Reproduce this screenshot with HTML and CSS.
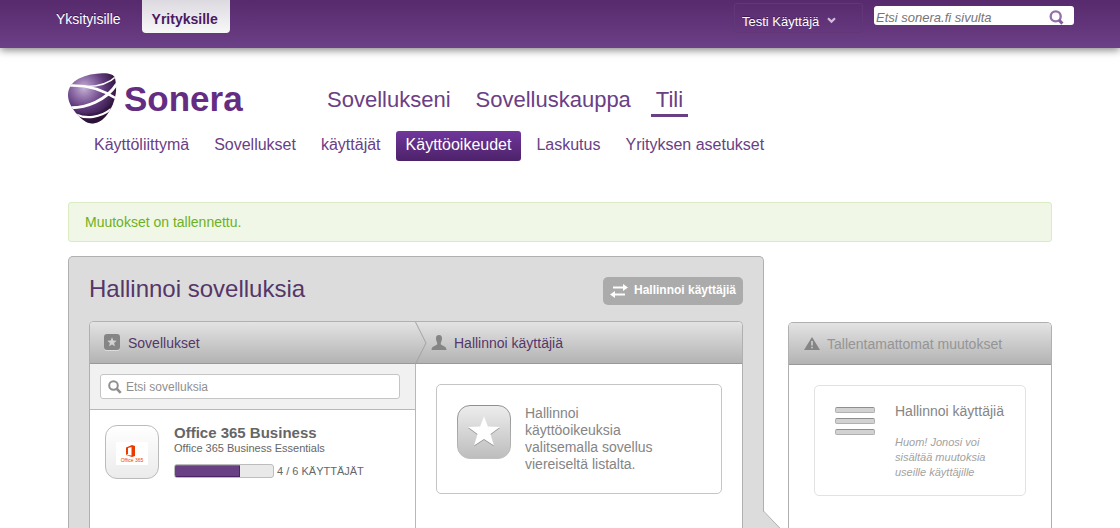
FILE: index.html
```html
<!DOCTYPE html>
<html lang="fi">
<head>
<meta charset="utf-8">
<title>Sonera – Käyttöoikeudet</title>
<link rel="stylesheet" href="styles.css">
</head>
<body>
<header class="topbar">
  <nav class="segments">
    <a href="#" class="segment">Yksityisille</a>
    <a href="#" class="segment segment-active">Yrityksille</a>
  </nav>
  <div class="tools">
    <button type="button" class="user-menu">Testi Käyttäjä
      <svg width="9" height="7" viewBox="0 0 9 7" aria-hidden="true"><path d="M1 1.2 4.5 4.6 8 1.2" fill="none" stroke="#cdbfd6" stroke-width="2.2"/></svg>
    </button>
    <form class="site-search">
      <input type="text" class="site-search-input" aria-label="Etsi sonera.fi sivulta" placeholder="Etsi sonera.fi sivulta">
      <button type="button" class="site-search-button" aria-label="Etsi">
        <svg width="15" height="15" viewBox="0 0 15 15" aria-hidden="true"><circle cx="6.7" cy="6.4" r="5" fill="none" stroke="#9670ad" stroke-width="2.4"/><path d="m10 10 3.4 3.6" stroke="#865a9f" stroke-width="3"/></svg>
      </button>
    </form>
  </div>
</header>

<div class="page">
  <div class="masthead">
    <a href="#" class="brand">
      <svg class="brand-mark" width="50" height="52" viewBox="0 0 50 52" aria-hidden="true">
        <defs>
          <radialGradient id="stone" cx="16" cy="15" r="34" gradientUnits="userSpaceOnUse">
            <stop offset="0" stop-color="#c5b3d4"/><stop offset=".25" stop-color="#9b7cb2"/><stop offset=".6" stop-color="#5f3a7c"/><stop offset="1" stop-color="#2c1238"/>
          </radialGradient>
          <clipPath id="stone-shape"><path d="M34 .3C41 0 46 1.500 47 5c1 5 1.600 11 .7 16-1.200 7-3.700 14-8.200 20C35 47 30 50.500 24.500 50.500c-6 0-12-5-16.500-10.500C3 34 0 28 0 22 0 15 4 9 11 5.500 18 2 27 .5 34 .3z"/></clipPath>
        </defs>
        <g clip-path="url(#stone-shape)">
          <rect width="50" height="52" fill="url(#stone)"/>
          <path d="M4 38c14 6 28 3 40-8l-6 16-12 6H16z" fill="#2c1238" opacity=".35"/>
          <g fill="none" stroke="#fff">
            <path d="M18 13.500C31 13.500 41 10.500 48 3.500" stroke-width="1.600"/>
            <path d="M2 12.500C18 12 34 16 49 26" stroke-width="2.400"/>
            <path d="M-1 34.500C18 36 39 27 49 10.500" stroke-width="3"/>
            <path d="M8 41.500c10 4.500 24 3.500 35-5.500" stroke-width="2.200"/>
          </g>
        </g>
      </svg>
      <span class="brand-name">Sonera</span>
    </a>
    <nav class="main-nav">
      <a href="#" class="main-link">Sovellukseni</a>
      <a href="#" class="main-link">Sovelluskauppa</a>
      <a href="#" class="main-link main-link-active">Tili</a>
    </nav>
  </div>
  <nav class="sub-nav">
    <a href="#" class="sub-link">Käyttöliittymä</a>
    <a href="#" class="sub-link">Sovellukset</a>
    <a href="#" class="sub-link">käyttäjät</a>
    <a href="#" class="sub-link sub-link-active">Käyttöoikeudet</a>
    <a href="#" class="sub-link">Laskutus</a>
    <a href="#" class="sub-link">Yrityksen asetukset</a>
  </nav>

  <p class="alert" role="status">Muutokset on tallennettu.</p>

  <div class="workspace">
    <main class="manager">
      <svg class="manager-arrow" width="24" height="48" viewBox="0 0 24 48" aria-hidden="true"><path d="M0 0 24 24 0 48z" fill="#dcdcdc"/><path d="M.5 0 23.500 24 .5 48" fill="none" stroke="#b0b0b0"/></svg>
      <div class="manager-head">
        <h1 class="manager-title">Hallinnoi sovelluksia</h1>
        <button type="button" class="switch-button">
          <svg width="18" height="14" viewBox="0 0 18 14" aria-hidden="true"><path d="M3 2.500h10V0l5 3.500L13 7V4.500H3zM15 9.500H5V7L0 10.500 5 14v-2.500h10z" fill="#fff"/></svg>
          Hallinnoi käyttäjiä
        </button>
      </div>
      <div class="columns">
        <section class="column">
          <h2 class="column-head column-head-step">
            <svg width="16" height="17" viewBox="0 0 16 17" aria-hidden="true"><rect y="1" width="16" height="16" rx="3" fill="#dcdcdc"/><rect width="16" height="16" rx="3" fill="#858585"/><path d="m8 3.300 1.300 3.200 3.400.2-2.600 2.200.8 3.400L8 10.500l-2.900 1.800.8-3.400L3.300 6.700l3.400-.2z" fill="#d2d2d2"/></svg>
            Sovellukset
            <svg class="step-arrow" width="12" height="42" viewBox="0 0 12 42" aria-hidden="true"><path d="M.5 0 11 21 .5 42" fill="none" stroke="#a2a2a2"/></svg>
          </h2>
          <div class="filter">
            <label class="filter-box">
              <svg width="14" height="14" viewBox="0 0 14 14" aria-hidden="true"><circle cx="5.500" cy="5.500" r="4.300" fill="none" stroke="#8f8f8f" stroke-width="2"/><path d="m8.500 8.500 4.200 4.300" stroke="#8f8f8f" stroke-width="2.600"/></svg>
              <input type="text" class="filter-input" aria-label="Etsi sovelluksia" placeholder="Etsi sovelluksia">
            </label>
          </div>
          <article class="app">
            <div class="app-icon">
              <svg width="32" height="23" viewBox="0 0 32 23" aria-hidden="true"><path d="M0 0h32v23H0z" fill="#fff"/><path fill-rule="evenodd" d="m10 5.500 6-2.500 3 1v10l-3 1-6-2 5.500.6V5L12 6v6l-2 1z" fill="#eb3c00"/><text x="16" y="20" class="app-icon-text">Office 365</text></svg>
            </div>
            <div class="app-info">
              <h3 class="app-name">Office 365 Business</h3>
              <p class="app-plan">Office 365 Business Essentials</p>
              <div class="usage">
                <div class="usage-bar"><div class="usage-fill" style="width: 66.6%"></div></div>
                <span class="usage-text">4 / 6 KÄYTTÄJÄT</span>
              </div>
            </div>
          </article>
        </section>
        <section class="column">
          <h2 class="column-head">
            <svg width="16" height="16" viewBox="0 0 16 16" aria-hidden="true"><path d="M8 0c2.300 0 3 1.500 3 3.500S10 7 9.800 8v1.500c1 1 5.700 1.500 5.700 5.500H.5c0-4 4.700-4.500 5.700-5.500V8C6 7 5 5.500 5 3.500S5.700 0 8 0z" fill="#858585"/></svg>
            Hallinnoi käyttäjiä
          </h2>
          <div class="hint">
            <svg class="hint-icon" width="54" height="54" viewBox="0 0 54 54" aria-hidden="true">
              <defs><linearGradient id="tile" x2="0" y2="1"><stop offset="0" stop-color="#ededed"/><stop offset="1" stop-color="#bdbdbd"/></linearGradient><linearGradient id="tile-edge" x2="0" y2="1"><stop offset="0" stop-color="#8f8f8f"/><stop offset="1" stop-color="#c0c0c0"/></linearGradient></defs>
              <rect x=".5" y=".5" width="53" height="53" rx="12.500" fill="url(#tile)" stroke="url(#tile-edge)"/>
              <path d="m27 12 4 10.500 12 .5-9.500 7 3.500 11.500-10-6.500-10 6.500L20.500 30 11 23l12-.5z" fill="#999"/>
              <path d="m27 11 4 10.500 12 .5-9.500 7 3.500 11.500L27 34l-10 6.500L20.500 29 11 22l12-.5z" fill="#fff"/>
            </svg>
            <p class="hint-text">Hallinnoi käyttöoikeuksia valitsemalla sovellus viereiseltä listalta.</p>
          </div>
        </section>
      </div>
    </main>

    <aside class="queue">
      <h2 class="column-head queue-head">
        <svg width="16" height="13" viewBox="0 0 16 13" aria-hidden="true"><path d="m8 0 8 13H0z" fill="#858585"/><path d="M8 4v4.500m0 1.200v1.600" stroke="#d0d0d0" stroke-width="1.600"/></svg>
        Tallentamattomat muutokset
      </h2>
      <div class="queue-card">
        <div class="queue-lines"><span class="queue-line"></span><span class="queue-line"></span><span class="queue-line"></span></div>
        <div class="queue-text">
          <h3 class="queue-title">Hallinnoi käyttäjiä</h3>
          <p class="queue-note">Huom! Jonosi voi sisältää muutoksia useille käyttäjille</p>
        </div>
      </div>
    </aside>
  </div>
</div>
</body>
</html>
```
FILE: styles.css
```css
* { box-sizing: border-box; }

body {
  margin: 0;
  min-height: 100vh;
  display: flex;
  flex-direction: column;
  background: #fff;
  color: #666;
  font: 14px/16px "Liberation Sans", Arial, sans-serif;
}

h1, h2, h3, p { margin: 0; font-weight: normal; }
a { text-decoration: none; }
svg { display: block; flex: none; }
button, input { font: inherit; }

.topbar {
  display: flex;
  justify-content: space-between;
  align-items: flex-start;
  height: 48px;
  padding: 0 46px;
  background: linear-gradient(#57296d, #6c4087);
  box-shadow: 0 2px 8px rgba(0, 0, 0, .5);
}

.segments { display: flex; gap: 11px; }
.segment { padding: 11px 10px 6px; color: #fff; text-shadow: 0 -1px #3d1a50; }
.segment-active {
  padding-right: 12px;
  border-radius: 0 0 4px 4px;
  background: linear-gradient(#dcd9e0, #f8f8f8);
  color: #4a1a63;
  font-weight: bold;
  text-shadow: none;
}

.tools { display: flex; gap: 11px; padding-top: 3px; }
.user-menu {
  display: flex;
  align-items: center;
  gap: 8px;
  width: 129px;
  height: 30px;
  padding: 7px 7px 0;
  border: 1px solid #623779;
  border-radius: 3px;
  background: none;
  color: #fff;
  font-size: 13px;
  text-shadow: 0 -1px #3d1a50;
}
.user-menu svg { margin-bottom: 2px; }

.site-search {
  display: flex;
  align-items: center;
  width: 200px;
  height: 19px;
  margin-top: 3px;
  padding-right: 10px;
  border-radius: 3px;
  background: #fff;
}
.site-search-input {
  flex: 1;
  min-width: 0;
  height: 19px;
  padding: 3px 2px 0;
  border: 0;
  background: none;
  font-size: 13px;
  font-style: italic;
}
.site-search-input::placeholder { color: #757575; opacity: 1; }
.site-search-button { padding: 3px 0 0; border: 0; background: none; }

.page {
  flex: 1;
  display: flex;
  flex-direction: column;
  padding: 25px 68px 0;
}

.masthead { display: flex; }
.brand { display: flex; width: 258px; gap: 6px; }
.brand-name { padding-top: 6px; color: #642d82; font-size: 35px; font-weight: bold; line-height: 40px; }

.main-nav { display: flex; align-items: flex-start; gap: 15px; padding-top: 14px; }
.main-link { padding: 0 5px 1px; color: #6a4085; font-size: 22px; line-height: 26px; }
.main-link:first-child { padding-left: 1px; }
.main-link-active { border-bottom: 3px solid #6a4085; }

.sub-nav { display: flex; gap: 5px; margin-top: 6px; padding-left: 16px; }
.sub-link { padding: 5px 10px 7px; border-radius: 3px; color: #6a4085; font-size: 16px; line-height: 18px; }
.sub-link-active { background: linear-gradient(#71369c, #4c2269); color: #fff; }

.alert {
  margin-top: 41px;
  padding: 11px 16px;
  border: 1px solid #d9ecc4;
  border-radius: 3px;
  background: #f0f7e7;
  color: #6eb023;
}

.workspace { flex: 1; display: flex; gap: 24px; margin-top: 14px; overflow: hidden; }

.manager {
  position: relative;
  flex: 1;
  display: flex;
  flex-direction: column;
  padding: 20px 20px 0;
  border: 1px solid #b0b0b0;
  border-bottom: 0;
  border-radius: 5px 5px 0 0;
  background: #dcdcdc;
}
.manager-arrow { position: absolute; top: 254px; left: 100%; }
.manager-head { display: flex; justify-content: space-between; align-items: flex-start; }
.manager-title { color: #553668; font-size: 24px; line-height: 24px; }

.switch-button {
  display: flex;
  align-items: center;
  gap: 6px;
  height: 28px;
  padding: 0 7px 2px;
  border: 0;
  border-radius: 5px;
  background: #ababab;
  color: #fff;
  font-size: 12px;
  font-weight: bold;
}
.switch-button svg { margin-top: 2px; }

.columns {
  flex: 1;
  display: grid;
  grid-template-columns: 1fr 1fr;
  margin-top: 16px;
  border: 1px solid #b0b0b0;
  border-bottom: 0;
  border-radius: 5px 5px 0 0;
  background: #fff;
}
.column:first-child { border-right: 1px solid #b8b8b8; }

.column-head {
  display: flex;
  align-items: center;
  gap: 8px;
  height: 42px;
  padding: 0 14px;
  border-bottom: 1px solid #999;
  border-radius: 4px 4px 0 0;
  background: linear-gradient(#e3e3e3, #b3b3b3);
  color: #553668;
  font-size: 14px;
}
.column-head-step { position: relative; border-radius: 4px 0 0; }
.step-arrow { position: absolute; z-index: 1; top: 0; left: 100%; }
.column + .column .column-head {
  gap: 7px;
  margin-left: -1px;
  padding-left: 16px;
  border-radius: 0 4px 0 0;
}

.filter { padding: 10px 15px 10px 10px; border-bottom: 1px solid #b8b8b8; background: #f1f1f1; }
.filter-box {
  display: flex;
  align-items: center;
  height: 25px;
  padding: 0 7px;
  gap: 3px;
  border: 1px solid #c5c5c5;
  border-radius: 3px;
  background: #fff;
}
.filter-input { flex: 1; min-width: 0; padding: 0 1px; border: 0; background: none; font-size: 12px; }
.filter-input::placeholder { color: #8f8f8f; opacity: 1; }

.app { display: flex; gap: 15px; padding: 15px; }
.app-icon {
  display: flex;
  align-items: center;
  justify-content: center;
  width: 54px;
  height: 54px;
  padding-top: 3px;
  border: 1px solid #bbb;
  border-radius: 12px;
  background: linear-gradient(#fff, #ebebeb);
}
.app-icon-text { fill: #eb3c00; font-size: 5px; text-anchor: middle; }
.app-name { font-size: 15px; font-weight: bold; line-height: 16px; }
.app-plan { font-size: 11px; line-height: 14px; }
.usage { display: flex; align-items: center; gap: 3px; margin-top: 9px; }
.usage-bar {
  width: 100px;
  height: 14px;
  overflow: hidden;
  border: 1px solid #bdbdbd;
  border-radius: 3px;
  background: #e9e9e9;
}
.usage-fill { height: 12px; background: #6a4085; box-shadow: inset 0 1px #82639a, inset -1px -1px #4b2366; }
.usage-text { font-size: 11px; line-height: 14px; }

.hint {
  display: flex;
  gap: 14px;
  margin: 20px;
  padding: 20px;
  border: 1px solid #c5c5c5;
  border-radius: 5px;
}
.hint-text { max-width: 140px; color: #858585; line-height: 17px; }

.queue {
  width: 264px;
  margin-top: 66px;
  border: 1px solid #b0b0b0;
  border-bottom: 0;
  border-radius: 5px 5px 0 0;
}
.queue-head { gap: 7px; padding-left: 15px; color: #959595; }
.queue-card {
  display: flex;
  gap: 20px;
  margin: 20px 25px;
  padding: 17px 20px 15px;
  border: 1px solid #e2e2e2;
  border-radius: 5px;
}
.queue-lines { display: flex; flex-direction: column; gap: 5px; padding-top: 4px; }
.queue-line { width: 40px; height: 6px; border: 1px solid #b0b0b0; border-top-color: #8f8f8f; border-radius: 2px; background: #d2d2d2; }
.queue-title { color: #858585; font-size: 14px; white-space: nowrap; }
.queue-note { margin-top: 16px; color: #a2a2a2; font-size: 11px; font-style: italic; line-height: 15px; }
```
